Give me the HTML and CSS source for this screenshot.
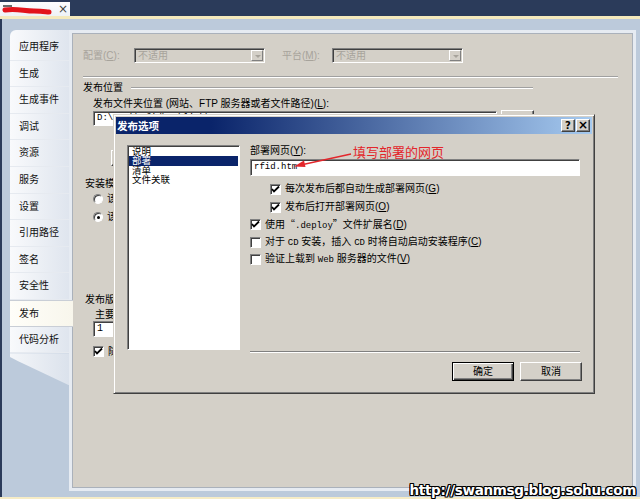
FILE: index.html
```html
<!DOCTYPE html>
<html lang="zh-CN">
<head>
    <meta charset="UTF-8">
    <meta name="viewport" content="width=device-width, initial-scale=1.0">
    <title>发布</title>
    <link rel="stylesheet" href="styles.css">
</head>
<body>
    <!-- Document tab strip -->
    <div class="topbar">
        <div class="doc-tab">
            <svg class="scribble" width="54" height="14" viewBox="0 0 54 14"><path d="M3 4 L12 4" stroke="#3a3a3a" stroke-width="1.5" fill="none"/><path d="M5 8 C 16 6, 24 9, 34 9 S 46 10, 49 10" stroke="#e3141b" stroke-width="5" fill="none" stroke-linecap="round"/></svg>
            <span class="tab-close">&times;</span>
        </div>
    </div>
    <div class="accent"></div>

    <div class="workspace">
        <div class="frame">
            <div class="sidebar">
                <ul class="tabs">
                    <li>应用程序</li>
                    <li>生成</li>
                    <li>生成事件</li>
                    <li>调试</li>
                    <li>资源</li>
                    <li>服务</li>
                    <li>设置</li>
                    <li>引用路径</li>
                    <li>签名</li>
                    <li>安全性</li>
                    <li class="active">发布</li>
                    <li>代码分析</li>
                </ul>
                <div class="tail"></div>
            </div>

            <div class="content">
                <div class="page">
                    <div class="config-row">
                        <label class="cfg-label">配置(<u>C</u>):</label>
                        <div class="combo"><span>不适用</span><span class="combo-btn"></span></div>
                        <label class="cfg-label platform">平台(<u>M</u>):</label>
                        <div class="combo"><span>不适用</span><span class="combo-btn"></span></div>
                    </div>
                    <div class="rule"></div>

                    <div class="group-title"><span>发布位置</span></div>
                    <div class="field-label">发布文件夹位置 (网站、FTP 服务器或者文件路径)(<u>L</u>):</div>
                    <div class="path-row">
                        <div class="textbox path">D:\Work\rfid\publish\</div>
                        <div class="btn small">...</div>
                    </div>
                    <div class="btn-row">
                        <div class="btn">应用程序文件(F)...</div>
                        <div class="btn">必备组件(D)...</div>
                        <div class="btn">更新(U)...</div>
                    </div>

                    <div class="section-title">安装模式和设置</div>
                    <div class="radio-row"><span class="radio"></span><span>该应用程序只能联机使用</span></div>
                    <div class="radio-row"><span class="radio on"></span><span>该应用程序也可以脱机使用</span></div>

                    <div class="section-title version">发布版本</div>
                    <div class="sub-label">主要(<u>R</u>):</div>
                    <div class="textbox version-box">1</div>
                    <div class="check-row outer"><span class="check on"><svg width="9" height="9" viewBox="0 0 9 9"><path d="M1 4 L3 6.5 L8 1.5" stroke="#000" stroke-width="1.8" fill="none"/></svg></span><span>随每次发布自动递增修订号</span></div>
                </div>
            </div>
        </div>
    </div>
    <div class="statusline"></div>

    <!-- Modal dialog -->
    <div class="dialog">
        <div class="titlebar">
            <span class="title">发布选项</span>
            <span class="cap-btn">?</span>
            <span class="cap-btn close">&times;</span>
        </div>
        <div class="dialog-body">
            <ul class="listbox">
                <li>说明</li>
                <li class="selected">部署</li>
                <li>清单</li>
                <li>文件关联</li>
            </ul>
            <div class="panel">
                <div class="panel-label">部署网页(<u>Y</u>):</div>
                <div class="textbox web">rfid.htm</div>
                <div class="check-row indent"><span class="check on"><svg width="9" height="9" viewBox="0 0 9 9"><path d="M1 4 L3 6.5 L8 1.5" stroke="#000" stroke-width="1.8" fill="none"/></svg></span><span>每次发布后都自动生成部署网页(<u>G</u>)</span></div>
                <div class="check-row indent"><span class="check on"><svg width="9" height="9" viewBox="0 0 9 9"><path d="M1 4 L3 6.5 L8 1.5" stroke="#000" stroke-width="1.8" fill="none"/></svg></span><span>发布后打开部署网页(<u>O</u>)</span></div>
                <div class="check-row"><span class="check on"><svg width="9" height="9" viewBox="0 0 9 9"><path d="M1 4 L3 6.5 L8 1.5" stroke="#000" stroke-width="1.8" fill="none"/></svg></span><span>使用<span class="cjk">“</span><span class="mono">.deploy</span><span class="cjk">”</span>文件扩展名(<u>D</u>)</span></div>
                <div class="check-row"><span class="check"></span><span>对于 <span class="mono">CD</span> 安装，插入 <span class="mono">CD</span> 时将自动启动安装程序(<u>C</u>)</span></div>
                <div class="check-row"><span class="check"></span><span>验证上载到 <span class="mono">Web</span> 服务器的文件(<u>V</u>)</span></div>
                <div class="separator"></div>
            </div>
        </div>
        <div class="dialog-foot">
            <div class="btn push default">确定</div>
            <div class="btn push">取消</div>
        </div>
    </div>

    <!-- Red note drawn over the screenshot -->
    <div class="note">填写部署的网页</div>
    <svg class="note-arrow" width="64" height="20" viewBox="0 0 64 20">
        <path d="M60 3 L12 13.5" stroke="#e3262b" stroke-width="1.3" fill="none"/>
        <path d="M3 15.5 L13 9.5 L14.5 16 Z" fill="#e3262b"/>
    </svg>

    <div class="watermark">http://swanmsg.blog.sohu.com</div>
</body>
</html>
```

FILE: styles.css
```css
*, *::before, *::after {
    margin: 0;
    padding: 0;
    box-sizing: border-box;
}

body {
    width: 640px;
    height: 499px;
    overflow: hidden;
    position: relative;
    background: linear-gradient(to right, #2b3b5a 2px, #bccadb 2px);
    font-family: "Liberation Sans", "Noto Sans CJK SC", sans-serif;
    font-size: 10px;
    line-height: 12px;
    color: #000;
}

u {
    text-decoration: underline;
}

.mono {
    font-family: "Liberation Mono", monospace;
    font-size: 9px;
}

.cjk {
    font-family: "Noto Sans CJK SC", sans-serif;
}

/* top strip */
.topbar {
    height: 16px;
    background: #2b3b5a;
    padding-top: 2px;
}

.doc-tab {
    width: 70px;
    height: 14px;
    background: linear-gradient(#fdfdfe, #eef2f7);
    position: relative;
}

.scribble {
    position: absolute;
    left: 0;
    top: 0;
}

.tab-close {
    position: absolute;
    left: 58px;
    top: 0;
    font-family: "DejaVu Sans", sans-serif;
    font-size: 12px;
    line-height: 14px;
    color: #444;
}

.accent {
    height: 3px;
    background: #f4e9bd;
}

.workspace {
    height: 478px;
    padding: 11px 4px 0 10px;
}

.statusline {
    height: 2px;
    background: #f6ecc6;
}

.frame {
    display: flex;
    height: 461px;
}

/* property page tabs */
.sidebar {
    width: 59px;
    display: flex;
    flex-direction: column;
    position: relative;
    z-index: 2;
}

.tabs {
    list-style: none;
    padding-top: 4px;
    background: linear-gradient(to right, #f9fafc, #dfe5ee);
    border-top-left-radius: 6px;
}

.tabs li {
    height: 26.6px;
    line-height: 26px;
    padding-left: 9px;
    font-size: 10px;
    color: #111;
    border-bottom: 1px solid #e6eaf0;
}

.tabs li.active {
    margin-right: -4px;
    background: linear-gradient(to right, #fffef9, #f8f6ec);
    border-top: 1px solid #c9ced6;
    border-bottom: 1px solid #c9ced6;
}

.tail {
    height: 32px;
    background: linear-gradient(to right, #f4f6f9, #dbe2ec);
    clip-path: polygon(0 0, 100% 0, 100% 100%, 14% 25%, 0 12%);
}

.content {
    flex: 1;
    border: 3px solid #e6ebf2;
}

.page {
    height: 100%;
    border: 1px solid #aab1bb;
    background: #d4d0c8;
    padding: 14px 14px 0 10px;
}

/* config bar */
.config-row {
    display: flex;
    align-items: center;
    height: 15px;
    color: #a7a39b;
}

.cfg-label {
    width: 51px;
}

.cfg-label.platform {
    margin-left: 17px;
    width: 50px;
}

.combo {
    width: 131px;
    height: 15px;
    display: flex;
    align-items: center;
    padding-left: 3px;
    border: 1px solid;
    border-color: #808080 #fff #fff #808080;
    box-shadow: inset 1px 1px #404040;
}

.combo-btn {
    margin-left: auto;
    margin-right: 1px;
    width: 12px;
    height: 11px;
    background: #d4d0c8;
    border: 1px solid;
    border-color: #fff #808080 #808080 #fff;
    position: relative;
}

.combo-btn::after {
    content: "";
    position: absolute;
    left: 3px;
    top: 4px;
    border-left: 3px solid transparent;
    border-right: 3px solid transparent;
    border-top: 3px solid #a7a39b;
}

.rule {
    margin-top: 13px;
    border-top: 1px solid #a0a0a0;
    border-bottom: 1px solid #fff;
}

.group-title {
    display: flex;
    align-items: center;
    margin-top: 4px;
    margin-right: 85px;
    height: 12px;
}

.group-title::after {
    content: "";
    flex: 1;
    margin-left: 8px;
    border-top: 1px solid #a0a0a0;
    border-bottom: 1px solid #fff;
}

.field-label {
    margin: 4px 0 0 10px;
    white-space: nowrap;
}

.path-row {
    display: flex;
    margin: 1px 0 0 10px;
    gap: 4px;
}

.textbox {
    height: 15px;
    background: #fff;
    border: 1px solid;
    border-color: #808080 #fff #fff #808080;
    box-shadow: inset 1px 1px #404040;
    padding-left: 3px;
    font-family: "Liberation Mono", monospace;
    font-size: 9px;
    line-height: 13px;
    white-space: nowrap;
    overflow: hidden;
}

.textbox.path {
    width: 404px;
}

.btn {
    height: 16px;
    padding: 0 8px;
    background: #d4d0c8;
    border: 1px solid;
    border-color: #fff #404040 #404040 #fff;
    box-shadow: inset -1px -1px #808080;
    text-align: center;
    line-height: 14px;
    white-space: nowrap;
}

.btn.small {
    width: 33px;
    margin-top: -1px;
}

.btn-row {
    display: flex;
    gap: 6px;
    margin: 24px 0 0 28px;
}

.section-title {
    margin: 12px 0 0 2px;
}

.section-title.version {
    margin-top: 68px;
}

.radio-row {
    display: flex;
    align-items: center;
    gap: 4px;
    height: 18px;
    margin-left: 10px;
}

.radio {
    width: 10px;
    height: 10px;
    border-radius: 50%;
    background: #fff;
    border: 1px solid;
    border-color: #808080 #fff #fff #808080;
    box-shadow: inset 1px 1px #404040;
    position: relative;
}

.radio.on::after {
    content: "";
    position: absolute;
    left: 2.5px;
    top: 2.5px;
    width: 3px;
    height: 3px;
    border-radius: 50%;
    background: #000;
}

.sub-label {
    margin: 3px 0 0 12px;
}

.version-box {
    width: 60px;
    margin: 0 0 0 10px;
    height: 16px;
    font-size: 10px;
}

.check-row {
    display: flex;
    align-items: center;
    gap: 4px;
    height: 17.6px;
    white-space: nowrap;
}

.check-row.outer {
    margin: 6px 0 0 10px;
}

.check {
    width: 11px;
    height: 11px;
    flex: none;
    background: #fff;
    border: 1px solid;
    border-color: #808080 #fff #fff #808080;
    box-shadow: inset 1px 1px #404040;
    display: flex;
    align-items: center;
    justify-content: center;
}

/* dialog */
.dialog {
    position: absolute;
    left: 113px;
    top: 114px;
    width: 482px;
    height: 280px;
    background: #d4d0c8;
    border: 1px solid;
    border-color: #d4d0c8 #404040 #404040 #d4d0c8;
    box-shadow: inset 1px 1px #fff, inset -1px -1px #808080;
    padding: 2px;
    z-index: 5;
}

.titlebar {
    height: 17px;
    display: flex;
    align-items: center;
    padding: 0 2px 0 1px;
    background: linear-gradient(to right, #0a246a 20%, #a6caf0);
    color: #fff;
}

.title {
    flex: 1;
    font-weight: bold;
    font-size: 10.5px;
}

.cap-btn {
    width: 14px;
    height: 13px;
    background: #d4d0c8;
    border: 1px solid;
    border-color: #fff #404040 #404040 #fff;
    box-shadow: inset -1px -1px #808080;
    color: #000;
    font-family: "DejaVu Sans", sans-serif;
    font-weight: bold;
    font-size: 10px;
    line-height: 11px;
    text-align: center;
}

.cap-btn.close {
    margin-left: 1px;
    font-size: 12px;
}

.dialog-body {
    display: flex;
    padding: 11px 12px 0 11px;
}

.listbox {
    list-style: none;
    width: 113px;
    height: 205px;
    background: #fff;
    border: 1px solid;
    border-color: #808080 #fff #fff #808080;
    box-shadow: inset 1px 1px #404040;
    padding: 1px 1px 0 2px;
}

.listbox li {
    height: 9.3px;
    line-height: 9px;
    padding-left: 2px;
    font-size: 9.5px;
}

.listbox li.selected {
    background: #0a246a;
    color: #fff;
    margin-left: -1px;
    padding-left: 3px;
}

.panel {
    width: 330px;
    height: 208px;
    margin-left: 10px;
    display: flex;
    flex-direction: column;
}

.panel-label {
    height: 12px;
}

.textbox.web {
    margin-top: 2px;
    height: 17px;
    line-height: 15px;
}

.textbox.web + .check-row {
    margin-top: 4.7px;
}

.check-row.indent {
    padding-left: 20px;
}

.separator {
    margin-top: auto;
    border-top: 1px solid #808080;
    border-bottom: 1px solid #fff;
}

.dialog-foot {
    display: flex;
    justify-content: flex-end;
    gap: 6px;
    padding: 9px 10px 0 0;
}

.btn.push {
    width: 62px;
    height: 19px;
    line-height: 17px;
}

.btn.default {
    border-color: #000;
    box-shadow: inset 1px 1px #fff, inset -1px -1px #404040, inset -2px -2px #808080;
}

/* annotation */
.note {
    position: absolute;
    left: 353px;
    top: 144px;
    font-family: "Noto Sans CJK SC", sans-serif;
    font-size: 13px;
    line-height: 16px;
    color: #e3262b;
    z-index: 6;
}

.note-arrow {
    position: absolute;
    left: 291px;
    top: 151px;
    z-index: 6;
}

.watermark {
    position: absolute;
    right: 4px;
    bottom: 1px;
    font-family: "DejaVu Sans", sans-serif;
    font-weight: bold;
    font-size: 13.5px;
    letter-spacing: -0.3px;
    line-height: 16px;
    color: #fff;
    text-shadow: 1px 0 #000, -1px 0 #000, 0 1px #000, 0 -1px #000, 1px 1px #000, -1px -1px #000, 1px -1px #000, -1px 1px #000;
    z-index: 7;
}
```
